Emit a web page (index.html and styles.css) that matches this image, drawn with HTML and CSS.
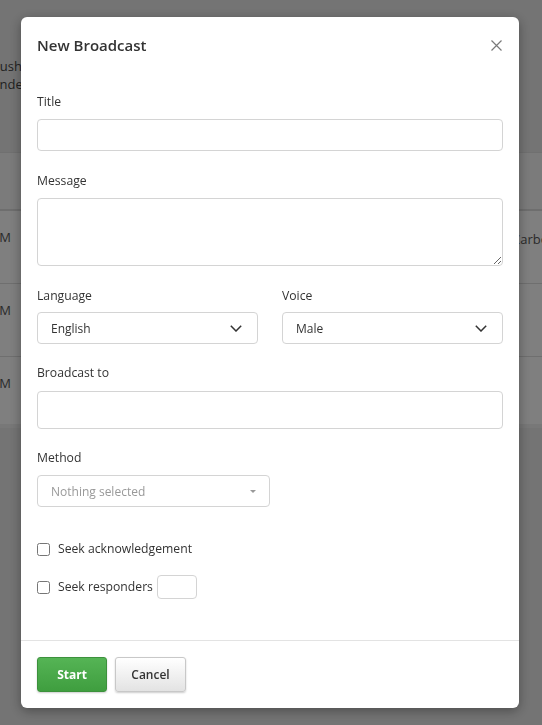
FILE: index.html
```html
<!DOCTYPE html>
<html lang="en">
<head>
<meta charset="utf-8">
<title>New Broadcast</title>
<link rel="stylesheet" href="styles.css">
</head>
<body>
<div class="page">
  <div class="intro">
    <div class="intro-line l1">Push reminders will be sent to all</div>
    <div class="intro-line l2">responders who are on duty</div>
  </div>
  <div class="table">
    <div class="thead"></div>
    <div class="trow"><span class="time">10:15 PM</span><span class="who">Carbon</span></div>
    <div class="trow"><span class="time">09:40 PM</span></div>
    <div class="trow last"><span class="time">08:05 PM</span></div>
  </div>
</div>

<div class="backdrop"></div>

<div class="modal-wrap">
  <div class="modal">
    <div class="modal-header">
      <h4 class="modal-title">New Broadcast</h4>
      <button class="close" type="button" aria-label="Close">
        <svg width="11" height="11" viewBox="0 0 11 11"><path d="M0.5 0.5 L10.5 10.5 M10.5 0.5 L0.5 10.5" stroke="#7a7a7a" stroke-width="1.2" fill="none"/></svg>
      </button>
    </div>
    <div class="modal-body">
      <div class="group">
        <label class="lbl">Title</label>
        <input class="field h32" type="text">
      </div>
      <div class="group">
        <label class="lbl">Message</label>
        <textarea class="field area"></textarea>
      </div>
      <div class="group cols">
        <div class="col">
          <label class="lbl">Language</label>
          <div class="field h32 select"><span>English</span>
            <svg class="chev" width="12" height="7" viewBox="0 0 12 7"><path d="M0.8 0.8 L6 6 L11.2 0.8" stroke="#333" stroke-width="1.5" fill="none"/></svg>
          </div>
        </div>
        <div class="col">
          <label class="lbl">Voice</label>
          <div class="field h32 select"><span>Male</span>
            <svg class="chev" width="12" height="7" viewBox="0 0 12 7"><path d="M0.8 0.8 L6 6 L11.2 0.8" stroke="#333" stroke-width="1.5" fill="none"/></svg>
          </div>
        </div>
      </div>
      <div class="group bcast">
        <label class="lbl">Broadcast to</label>
        <div class="field h38"></div>
      </div>
      <div class="group method">
        <label class="lbl">Method</label>
        <div class="field h32 select picker"><span class="ph">Nothing selected</span><span class="caret"></span></div>
      </div>
      <div class="check first">
        <input type="checkbox" id="ack"><label for="ack">Seek acknowledgement</label>
      </div>
      <div class="check">
        <input type="checkbox" id="resp"><label for="resp">Seek responders</label><input class="count" type="text">
      </div>
    </div>
    <div class="modal-footer">
      <button class="btn btn-start" type="button">Start</button>
      <button class="btn btn-cancel" type="button">Cancel</button>
    </div>
  </div>
</div>
</body>
</html>
```
FILE: styles.css
```css
html, body {
  margin: 0;
  padding: 0;
}
body {
  font-family: "Open Sans", "Noto Sans", "Liberation Sans", sans-serif;
  font-size: 12.2px;
  color: #333;
  overflow: hidden;
}

/* background page */
.page {
  height: 725px;
  background: #e9e9e9;
  overflow: hidden;
}
.intro {
  height: 152px;
  box-sizing: border-box;
  padding-top: 57px;
  font-size: 13px;
  line-height: 18px;
  color: #444;
}
.intro-line {
  white-space: nowrap;
}
.l1 { margin-left: -8px; }
.l2 { margin-left: -35px; }

.table {
  background: #fff;
}
.thead {
  height: 59px;
  box-sizing: border-box;
  background: #f6f6f6;
  border-top: 1px solid #e0e0e0;
  border-bottom: 2px solid #dcdcdc;
}
.trow {
  height: 73px;
  box-sizing: border-box;
  border-bottom: 1px solid #dedede;
  display: flex;
  align-items: flex-start;
  padding-top: 17px;
  font-size: 13px;
  line-height: 18px;
  color: #555;
}
.trow.last {
  height: 71px;
  border-bottom: 4px solid #f0f0f0;
}
.time {
  width: 70px;
  margin-left: -59px;
  text-align: right;
  white-space: nowrap;
}
.who {
  margin-left: auto;
  width: 30px;
  overflow: hidden;
  white-space: nowrap;
  padding-top: 2px;
}

/* overlay */
.backdrop {
  position: fixed;
  inset: 0;
  background: rgba(0, 0, 0, 0.5);
}
.modal-wrap {
  position: fixed;
  inset: 0;
  display: flex;
  justify-content: center;
  align-items: flex-start;
  padding: 17px 2px 0 0;
}
.modal {
  width: 498px;
  background: #fff;
  border-radius: 6px;
  box-shadow: 0 3px 12px rgba(0, 0, 0, 0.35);
  display: flex;
  flex-direction: column;
}
.modal-header {
  display: flex;
  align-items: center;
  padding: 16px;
}
.modal-title {
  margin: 0;
  font-size: 15px;
  line-height: 24px;
  font-weight: 600;
  color: #333;
}
.close {
  margin-left: auto;
  margin-right: 1px;
  border: 0;
  background: none;
  padding: 0;
  width: 11px;
  height: 11px;
  display: flex;
}

.modal-body {
  padding: 20px 16px 41px;
}
.group {
  margin-bottom: 21px;
}
.lbl {
  display: block;
  line-height: 18px;
  margin-bottom: 8px;
  color: #333;
}
.cols {
  display: flex;
  gap: 24px;
  margin-bottom: 20px;
}
.cols .lbl {
  margin-bottom: 7px;
}
.bcast {
  margin-bottom: 20px;
}
.bcast .lbl {
  margin-bottom: 9px;
}
.group.method {
  margin-bottom: 32px;
}
.col {
  flex: 1;
  min-width: 0;
}
.field {
  display: block;
  box-sizing: border-box;
  width: 100%;
  margin: 0;
  border: 1px solid #d4d4d4;
  border-radius: 4px;
  background: #fff;
  font: inherit;
}
.h32 { height: 32px; }
.h38 { height: 38px; }
.area {
  height: 68px;
  resize: vertical;
}
.select {
  display: flex;
  align-items: center;
  padding: 0 15px 0 13px;
  font-size: 12px;
  color: #333;
}
.select .chev {
  margin-left: auto;
}
.picker {
  width: 233px;
  padding-right: 13px;
}
.ph {
  color: #999;
}
.caret {
  margin-left: auto;
  width: 0;
  height: 0;
  border-left: 3px solid transparent;
  border-right: 3px solid transparent;
  border-top: 3px solid #999;
}

.check {
  display: flex;
  align-items: center;
  line-height: 20px;
  margin-top: 16px;
}
.check.first {
  margin-top: 0;
}
.check input[type="checkbox"] {
  margin: 0 8px 0 0;
  width: 13px;
  height: 13px;
}
.count {
  box-sizing: border-box;
  width: 40px;
  height: 24px;
  margin-left: 4px;
  border: 1px solid #d4d4d4;
  border-radius: 4px;
}

.modal-footer {
  border-top: 1px solid #e3e3e3;
  padding: 16px;
  display: flex;
  gap: 8px;
}
.btn {
  height: 35px;
  box-sizing: border-box;
  border-radius: 3px;
  font-family: inherit;
  font-size: 12px;
  font-weight: 700;
  padding: 0;
  box-shadow: 0 1px 2px rgba(0, 0, 0, 0.2);
}
.btn-start {
  width: 70px;
  color: #fff;
  background: linear-gradient(#55b455, #3f9e3f);
  border: 1px solid #3c913c;
}
.btn-cancel {
  width: 71px;
  color: #333;
  font-weight: 600;
  background: linear-gradient(#ffffff, #e3e3e3);
  border: 1px solid #c8c8c8;
}
```
